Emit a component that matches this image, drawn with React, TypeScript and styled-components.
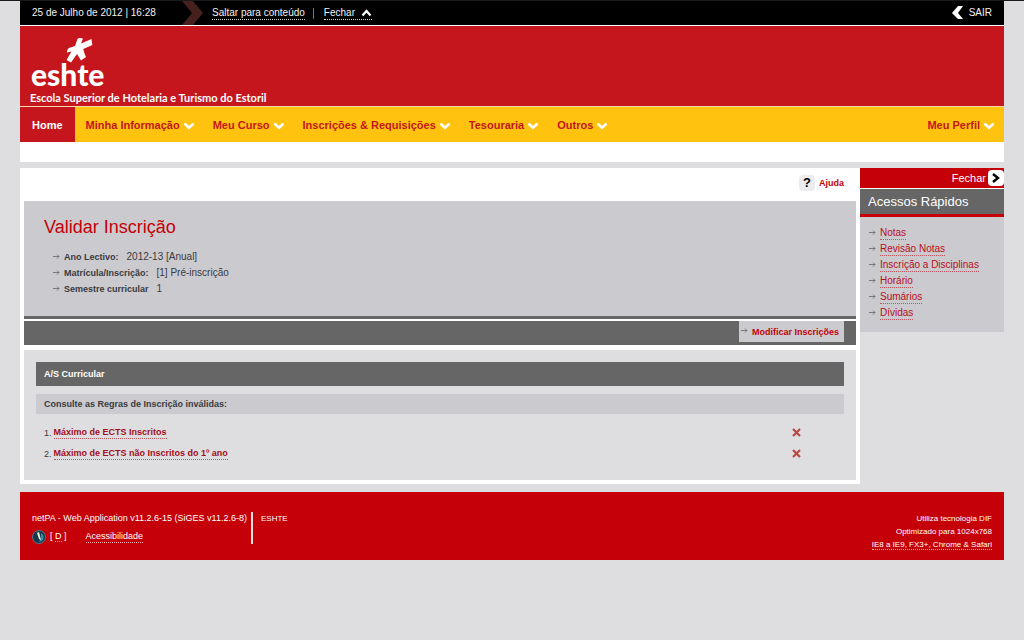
import React from "react";
import styled, { createGlobalStyle, css } from "styled-components";

const color = {
  page: "#dedee0",
  brand: "#c4161c",
  red: "#c50008",
  link: "#b90d1e",
  yellow: "#ffc20f",
  panel: "#cbcacf",
  dark: "#666666",
  text: "#3a3a3e",
};

const GlobalStyle = createGlobalStyle`
  * { box-sizing: border-box; }
  body {
    margin: 0;
    background: ${color.page};
    color: ${color.text};
    font-family: "Liberation Sans", Arial, sans-serif;
    font-size: 10px;
    line-height: 16px;
  }
  h1, h2, h3, p, ul, ol, dl, dd { margin: 0; padding: 0; }
  ul, ol { list-style: none; }
  button { font: inherit; color: inherit; background: none; border: 0; padding: 0; cursor: pointer; }
  a { color: inherit; text-decoration: none; }
  svg { display: block; flex: none; }
`;

const Page = styled.div`
  border-top: 1px solid #1a1a1c;
`;

const Wrapper = styled.div`
  padding: 0 20px;
`;

const TopBar = styled.div`
  display: flex;
  align-items: center;
  height: 25px;
  padding: 0 12px;
  background: #000;
  color: #f2f2f2;
  border-bottom: 1px solid #fff;
`;

const DateText = styled.span`
  width: 150px;
`;

const Chevron = styled.svg`
  margin-right: 8px;
`;

const dotted = css<{ $line?: string }>`
  border-bottom: 1px dotted ${(p) => p.$line || "#d8d8d8"};
`;

const TopLink = styled.a`
  line-height: 13px;
  ${dotted}
`;

const TopDivider = styled.span`
  width: 1px;
  height: 11px;
  margin: 0 10px 0 8px;
  background: #777;
`;

const TopButton = styled.button`
  display: flex;
  align-items: center;
  gap: 6px;
  line-height: 13px;
  ${dotted}
`;

const ExitLink = styled.a`
  display: flex;
  align-items: center;
  gap: 6px;
  margin-left: auto;
`;

const Banner = styled.header`
  height: 81px;
  padding: 11px 10px 0;
  background: ${color.brand};
  color: #fff;
  border-bottom: 1px solid #f8d9b0;
`;

const Logo = styled.svg`
  font-family: Lato, sans-serif;
  font-weight: 900;
  font-size: 30px;
`;

const Tagline = styled.p`
  font-family: Lato, sans-serif;
  font-weight: 700;
  font-size: 11px;
  line-height: 14px;
`;

const Nav = styled.nav`
  display: flex;
  height: 35px;
  background: ${color.yellow};
  color: ${color.brand};
  font-size: 11px;
  font-weight: 700;
`;

const HomeLink = styled.a`
  display: flex;
  align-items: center;
  padding: 0 12px;
  background: ${color.brand};
  color: #fff;
`;

const Menu = styled.ul`
  display: flex;
  flex: 1;
  gap: 19px;
  padding: 0 10px 0 11px;
`;

const MenuItem = styled.li<{ $end?: boolean }>`
  display: flex;
  margin-left: ${(p) => (p.$end ? "auto" : "0")};
`;

const MenuButton = styled.button`
  display: flex;
  align-items: center;
  gap: 4px;
  white-space: nowrap;
`;

const SubNav = styled.div`
  height: 20px;
  margin-bottom: 6px;
  background: #fff;
`;

const Columns = styled.div`
  display: flex;
  align-items: flex-start;
`;

const Main = styled.main`
  flex: 1;
  padding: 0 4px 4px;
  background: #fff;
`;

const HelpRow = styled.div`
  display: flex;
  justify-content: flex-end;
  height: 33px;
  padding: 7px 12px 0 0;
`;

const HelpLink = styled.a`
  display: flex;
  align-items: center;
  gap: 4px;
  height: 16px;
  color: ${color.red};
  font-size: 9px;
  font-weight: 700;
`;

const HelpMark = styled.span`
  width: 16px;
  border-radius: 4px;
  background: #ececee;
  color: #000;
  font-size: 13px;
  text-align: center;
`;

const Summary = styled.section`
  height: 118px;
  padding: 15px 20px 0;
  background: ${color.panel};
  border-bottom: 3px solid ${color.dark};
`;

const Title = styled.h1`
  color: ${color.red};
  font-size: 18px;
  font-weight: 400;
  line-height: 22px;
`;

const Facts = styled.dl`
  padding: 11px 0 0 9px;
`;

const Fact = styled.div`
  display: flex;
  align-items: center;
  height: 16px;
`;

const FactName = styled.dt`
  margin: 0 8px 0 4px;
  font-size: 9px;
  font-weight: 700;
`;

const Actions = styled.div`
  display: flex;
  justify-content: flex-end;
  height: 24px;
  margin: 2px 0 5px;
  padding-right: 12px;
  background: ${color.dark};
`;

const ActionButton = styled.button`
  display: flex;
  align-items: center;
  gap: 4px;
  height: 21px;
  padding: 0 5px 0 2px;
  background: ${color.panel};
  color: ${color.red};
  font-size: 9px;
  font-weight: 700;
`;

const Rules = styled.section`
  height: 130px;
  padding: 12px 12px 0;
  background: ${color.page};
  font-size: 9px;
`;

const RulesTitle = styled.h2`
  padding-left: 8px;
  background: ${color.dark};
  color: #fff;
  font-size: 9px;
  line-height: 24px;
`;

const RulesHint = styled.p`
  margin: 8px 0;
  padding-left: 8px;
  background: ${color.panel};
  font-weight: 700;
  line-height: 20px;
`;

const RuleItem = styled.li`
  display: flex;
  align-items: center;
  height: 21px;
  padding: 0 43px 0 8px;
`;

const RuleLink = styled.a`
  margin: 0 auto 0 2px;
  color: #a30d1c;
  font-weight: 700;
  line-height: 12px;
  ${dotted}
`;

const Sidebar = styled.aside`
  width: 144px;
  background: ${color.panel};
`;

const SidebarTop = styled.div`
  display: flex;
  justify-content: flex-end;
  height: 21px;
  background: ${color.red};
  color: #fff;
  border-bottom: 1px solid #fff;
`;

const CloseButton = styled.button`
  display: flex;
  align-items: center;
  gap: 2px;
  font-size: 11px;
`;

const CloseIcon = styled.span`
  display: flex;
  align-items: center;
  justify-content: center;
  width: 16px;
  height: 16px;
  border-radius: 4px;
  background: #fff;
`;

const SidebarTitle = styled.h2`
  padding-left: 8px;
  background: ${color.dark};
  border-bottom: 3px solid ${color.red};
  color: #fff;
  font-size: 13px;
  font-weight: 400;
  line-height: 25px;
`;

const QuickLinks = styled.ul`
  padding: 8px 8px 11px 9px;
`;

const QuickItem = styled.li`
  display: flex;
  align-items: center;
  gap: 4px;
  height: 16px;
`;

const QuickLink = styled.a`
  color: ${color.link};
  line-height: 12px;
  white-space: nowrap;
  ${dotted}
`;

const Footer = styled.footer`
  display: flex;
  height: 68px;
  margin-top: 8px;
  padding: 20px 12px 0;
  background: ${color.red};
  color: #fff;
  font-size: 8px;
  line-height: 13px;
`;

const FooterApp = styled.div`
  height: 32px;
  padding-right: 4px;
  border-right: 2px solid #fbdcdc;
  font-size: 9px;
`;

const FooterTools = styled.div`
  display: flex;
  align-items: center;
  height: 19px;
  margin-top: 2px;
`;

const FooterLink = styled.a`
  line-height: 11px;
  ${dotted}
`;

const DebugLabel = styled.span`
  margin: 0 19px 0 4px;
`;

const FooterOrg = styled.p`
  padding-left: 8px;
`;

const FooterTech = styled.div`
  margin-left: auto;
  text-align: right;
`;

const Arrow = () => (
  <svg width="7" height="7" viewBox="0 0 7 7" fill="none" stroke="#77777c" aria-hidden="true">
    <path d="M0 2.500h6M4 .5l2 2-2 2" />
  </svg>
);

const Down = () => (
  <svg width="10" height="10" viewBox="0 0 10 10" fill="#fff" aria-hidden="true">
    <path d="M0 3.500c1.500-1 2-.7 3 .5l2 2 2-2c1-1.200 1.500-1.500 3-.5v1.500L5 9.500 0 5z" />
  </svg>
);

const Cross = () => (
  <svg width="9" height="9" viewBox="0 0 9 9" fill="none" stroke="#b8483f" strokeWidth="2.2" role="img" aria-label="Inválida">
    <path d="M1 1l7 7M8 1l-7 7" />
  </svg>
);

const menus = ["Minha Informação", "Meu Curso", "Inscrições & Requisições", "Tesouraria", "Outros"];
const facts = [
  ["Ano Lectivo:", "2012-13 [Anual]"],
  ["Matrícula/Inscrição:", "[1] Pré-inscrição"],
  ["Semestre curricular", "1"],
];
const rules = ["Máximo de ECTS Inscritos", "Máximo de ECTS não Inscritos do 1º ano"];
const quick = ["Notas", "Revisão Notas", "Inscrição a Disciplinas", "Horário", "Sumários", "Dívidas"];

export default function App() {
  return (
    <Page>
      <GlobalStyle />
      <Wrapper>
        <TopBar>
          <DateText>25 de Julho de 2012 | 16:28</DateText>
          <Chevron width="22" height="24" viewBox="0 0 22 24" fill="#46201c" aria-hidden="true">
            <path d="M0 0h11l10 12-10 12H0l10-12z" />
          </Chevron>
          <TopLink href="#conteudo">Saltar para conteúdo</TopLink>
          <TopDivider />
          <TopButton type="button">
            Fechar
            <svg width="11" height="8" viewBox="0 0 11 8" fill="none" stroke="#fff" strokeWidth="2.2" aria-hidden="true">
              <path d="M1.500 6.500l4-4.500 4 4.500" />
            </svg>
          </TopButton>
          <ExitLink href="#sair">
            <svg width="11" height="14" viewBox="0 0 11 14" fill="#fff" aria-hidden="true">
              <path d="M6 0h5L6 7l5 6H6L0 7z" />
            </svg>
            SAIR
          </ExitLink>
        </TopBar>
        <Banner>
          <Logo width="80" height="54" viewBox="0 0 80 54" fill="#fff" role="img" aria-label="eshte">
            <path d="M47.500 2q1-1.500 5.500-.5l-2 5 10.500-4.500.8 6-9 4c.5 3 1.500 5 2.700 8l-5 3.500-4-6.500-6 8.500-4.500-2.500 5-8.500-4.500 1c0-2 .5-3.500 2-4.500l6-2z" />
            <text x="1" y="49">eshte</text>
          </Logo>
          <Tagline>Escola Superior de Hotelaria e Turismo do Estoril</Tagline>
        </Banner>
        <Nav>
          <HomeLink href="#home">Home</HomeLink>
          <Menu>
            {menus.map((m) => (
              <MenuItem key={m}>
                <MenuButton type="button">{m}<Down /></MenuButton>
              </MenuItem>
            ))}
            <MenuItem $end>
              <MenuButton type="button">Meu Perfil<Down /></MenuButton>
            </MenuItem>
          </Menu>
        </Nav>
        <SubNav />
        <Columns>
          <Main id="conteudo">
            <HelpRow>
              <HelpLink href="#ajuda"><HelpMark>?</HelpMark>Ajuda</HelpLink>
            </HelpRow>
            <Summary>
              <Title>Validar Inscrição</Title>
              <Facts>
                {facts.map(([name, value]) => (
                  <Fact key={name}>
                    <Arrow />
                    <FactName>{name}</FactName>
                    <dd>{value}</dd>
                  </Fact>
                ))}
              </Facts>
            </Summary>
            <Actions>
              <ActionButton type="button"><Arrow />Modificar Inscrições</ActionButton>
            </Actions>
            <Rules>
              <RulesTitle>A/S Curricular</RulesTitle>
              <RulesHint>Consulte as Regras de Inscrição inválidas:</RulesHint>
              <ol>
                {rules.map((r, i) => (
                  <RuleItem key={r}>
                    {i + 1}.<RuleLink href="#regra" $line="#c9505a">{r}</RuleLink>
                    <Cross />
                  </RuleItem>
                ))}
              </ol>
            </Rules>
          </Main>
          <Sidebar>
            <SidebarTop>
              <CloseButton type="button">
                Fechar
                <CloseIcon>
                  <svg width="8" height="10" viewBox="0 0 8 10" fill="none" stroke="#000" strokeWidth="2.4" aria-hidden="true">
                    <path d="M1 1l5 4-5 4" />
                  </svg>
                </CloseIcon>
              </CloseButton>
            </SidebarTop>
            <SidebarTitle>Acessos Rápidos</SidebarTitle>
            <QuickLinks>
              {quick.map((q) => (
                <QuickItem key={q}><Arrow /><QuickLink href="#acesso" $line="#c9505a">{q}</QuickLink></QuickItem>
              ))}
            </QuickLinks>
          </Sidebar>
        </Columns>
        <Footer>
          <FooterApp>
            <p>netPA - Web Application v11.2.6-15 (SiGES v11.2.6-8)</p>
            <FooterTools>
              <svg width="14" height="14" viewBox="0 0 14 14" aria-hidden="true">
                <circle cx="7" cy="7" r="6.500" fill="#12384f" stroke="#5b7686" />
                <path d="M9 3a5 5 0 0 1 1 8l-3 1 2-4z" fill="#2f8fb0" />
                <path d="M5 3l2-1 2 8-2-1z" fill="#f4efc4" />
              </svg>
              <DebugLabel>[ <FooterLink href="#debug" $line="#f0b0b0">D</FooterLink> ]</DebugLabel>
              <FooterLink href="#acessibilidade" $line="#f0b0b0">Acessibilidade</FooterLink>
            </FooterTools>
          </FooterApp>
          <FooterOrg>ESHTE</FooterOrg>
          <FooterTech>
            <p>Utiliza tecnologia DIF</p>
            <p>Optimizado para 1024x768</p>
            <FooterLink href="#navegadores" $line="#f0b0b0">IE8 a IE9, FX3+, Chrome &amp; Safari</FooterLink>
          </FooterTech>
        </Footer>
      </Wrapper>
    </Page>
  );
}
